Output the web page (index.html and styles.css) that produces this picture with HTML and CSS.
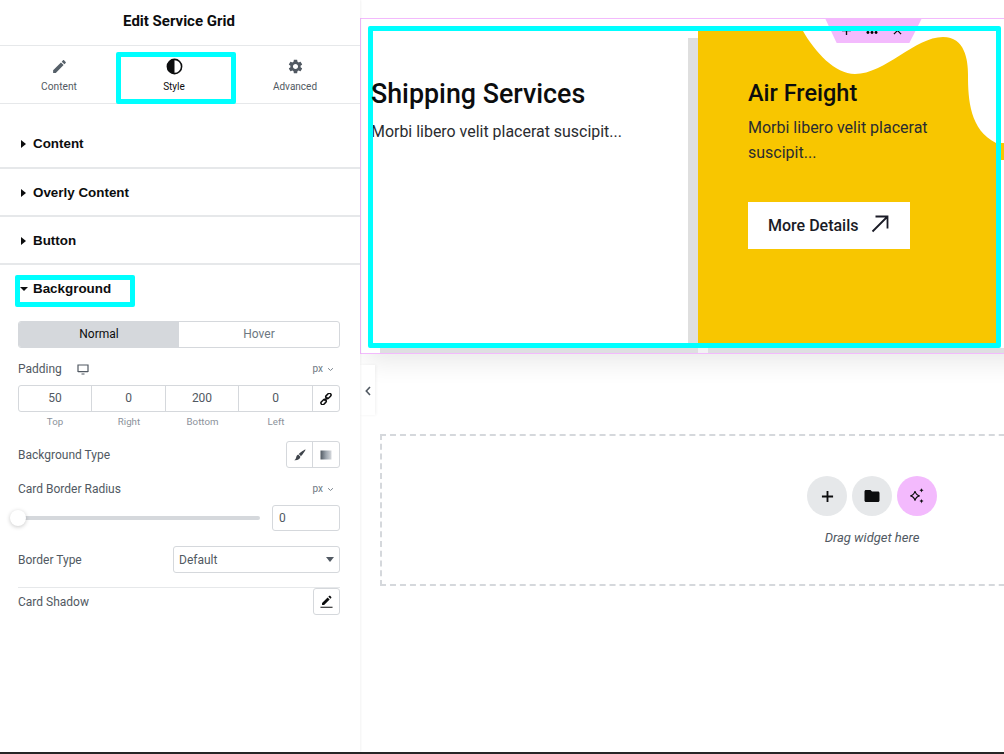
FILE: index.html
```html
<!DOCTYPE html>
<html lang="en">
<head>
<meta charset="utf-8">
<title>Edit Service Grid</title>
<link rel="stylesheet" href="styles.css">
</head>
<body>
<div class="app">
  <aside class="panel">
    <header class="panel-title">Edit Service Grid</header>
    <nav class="tabs">
      <div class="tab tab-first">
        <svg class="tab-icon" viewBox="0 0 24 24"><path fill="#566069" d="M3 17.25V21h3.75L17.81 9.94l-3.75-3.75L3 17.25zM20.71 7.04c.39-.39.39-1.02 0-1.41l-2.34-2.34c-.39-.39-1.02-.39-1.41 0l-1.83 1.83 3.75 3.75 1.83-1.83z"/></svg>
        <span>Content</span>
      </div>
      <div class="tab tab-active">
        <svg class="tab-icon" viewBox="0 0 16 16"><circle cx="8" cy="8" r="6.7" fill="#fff" stroke="#0c0d0e" stroke-width="1.5"/><path fill="#0c0d0e" d="M8 1.3a6.7 6.7 0 0 0 0 13.4z"/></svg>
        <span>Style</span>
      </div>
      <div class="tab">
        <svg class="tab-icon" viewBox="0 0 24 24"><path fill="#515962" d="M19.14 12.94c.04-.3.06-.61.06-.94 0-.32-.02-.64-.07-.94l2.03-1.58c.18-.14.23-.41.12-.61l-1.92-3.32c-.12-.22-.37-.29-.59-.22l-2.39.96c-.5-.38-1.03-.7-1.62-.94l-.36-2.54c-.04-.24-.24-.41-.48-.41h-3.84c-.24 0-.43.17-.47.41l-.36 2.54c-.59.24-1.13.57-1.62.94l-2.39-.96c-.22-.08-.47 0-.59.22L2.74 8.87c-.12.21-.08.47.12.61l2.03 1.58c-.05.3-.09.63-.09.94s.02.64.07.94l-2.03 1.58c-.18.14-.23.41-.12.61l1.92 3.32c.12.22.37.29.59.22l2.39-.96c.5.38 1.03.7 1.62.94l.36 2.54c.05.24.24.41.48.41h3.84c.24 0 .44-.17.47-.41l.36-2.54c.59-.24 1.13-.56 1.62-.94l2.39.96c.22.08.47 0 .59-.22l1.92-3.32c.12-.22.07-.47-.12-.61l-2.01-1.58zM12 15.6c-1.98 0-3.6-1.62-3.6-3.6s1.62-3.6 3.6-3.6 3.6 1.62 3.6 3.6-1.62 3.6-3.6 3.6z"/></svg>
        <span>Advanced</span>
      </div>
    </nav>

    <div class="sections">
      <div class="section section-first"><i class="caret-right"></i>Content</div>
      <div class="section"><i class="caret-right"></i>Overly Content</div>
      <div class="section"><i class="caret-right"></i>Button</div>
      <div class="section-open"><i class="caret-down"></i>Background</div>
    </div>

    <div class="controls">
      <div class="toggle">
        <div class="toggle-item toggle-on">Normal</div>
        <div class="toggle-item">Hover</div>
      </div>

      <div class="label-row padding-row">
        <span class="label-group">Padding
          <svg class="device" viewBox="0 0 12 11"><path fill="none" stroke="#515962" stroke-width="1.2" d="M1 1h10v6.5H1z"/><path fill="#515962" d="M1 7h10v1.3H1zM4.5 9.6h3v1h-3z"/></svg>
        </span>
        <span class="unit">px <svg class="unit-caret" viewBox="0 0 8 5"><path fill="none" stroke="#6d7882" stroke-width="1" d="M1.2 1l2.8 2.6L6.8 1"/></svg></span>
      </div>
      <div class="dims">
        <div class="dim">50</div>
        <div class="dim">0</div>
        <div class="dim">200</div>
        <div class="dim">0</div>
        <div class="dim dim-link">
          <svg class="link-icon" viewBox="0 0 12 12"><g fill="none" stroke="#0c0d0e" stroke-width="1.5"><rect x="5.4" y="1.2" width="6" height="3.4" rx="1.7" transform="rotate(-45 8.4 2.9)"/><rect x="0.6" y="7.4" width="6" height="3.4" rx="1.7" transform="rotate(-45 3.6 9.1)"/><path d="M4.4 7.6 7.6 4.4"/></g></svg>
        </div>
      </div>
      <div class="dim-labels">
        <span>Top</span><span>Right</span><span>Bottom</span><span>Left</span><span></span>
      </div>

      <div class="label-row bg-row">
        <span>Background Type</span>
        <div class="choices">
          <div class="choice">
            <svg class="choice-icon" viewBox="0 0 14 14"><path fill="#3f444b" d="M13.4.6c.4.4-3 5.6-5.2 7.8L5.6 5.8C7.8 3.6 13 .2 13.4.6zM4.9 6.5l2.6 2.6C7.1 11.8 4 13.4.3 13c1.9-1 1.9-2.5 2.4-3.8.4-1.2 1-2.2 2.2-2.7z"/></svg>
          </div>
          <div class="choice">
            <svg class="choice-icon" viewBox="0 0 12 12"><defs><linearGradient id="grad"><stop offset="0" stop-color="#515962"/><stop offset=".5" stop-color="#9da5ae"/><stop offset="1" stop-color="#d5d8dc"/></linearGradient></defs><rect x="0.5" y="1.5" width="11" height="9" fill="url(#grad)"/></svg>
          </div>
        </div>
      </div>

      <div class="label-row radius-row">
        <span>Card Border Radius</span>
        <span class="unit">px <svg class="unit-caret" viewBox="0 0 8 5"><path fill="none" stroke="#6d7882" stroke-width="1" d="M1.2 1l2.8 2.6L6.8 1"/></svg></span>
      </div>
      <div class="slider-row">
        <div class="slider"><span class="knob"></span></div>
        <div class="number">0</div>
      </div>

      <div class="label-row border-row">
        <span>Border Type</span>
        <div class="select">Default<i class="select-caret"></i></div>
      </div>

      <div class="label-row shadow-row">
        <span>Card Shadow</span>
        <div class="edit-btn">
          <svg class="edit-icon" viewBox="0 0 14 14"><path fill="#0c0d0e" d="M2.2 8.6 8.2 2.6l2.2 2.2-6 6H2.200zM9 1.800l.9-.9c.3-.3.7-.3 1 0l1.200 1.200c.3.3.3.7 0 1l-.9.9zM0.500 12.700h13V13.800H.5z"/></svg>
        </div>
      </div>
    </div>
  </aside>

  <main class="canvas">
    <section class="widget">
      <div class="frame">
        <article class="card-plain">
          <h2 class="plain-title">Shipping Services</h2>
          <p class="plain-text">Morbi libero velit placerat suscipit...</p>
        </article>
        <div class="card-gap"></div>
        <article class="card-yellow">
          <svg class="blob" viewBox="0 0 298 312"><path fill="#fff" d="M105 0C117 21 137 43 157 43C187 43 217 6 245 6C267 6 270 29 270 44C270 69 272 99 298 112V0Z"/></svg>
          <h2 class="yellow-title">Air Freight</h2>
          <p class="yellow-text">Morbi libero velit placerat suscipit...</p>
          <a class="more">More Details
            <svg class="more-icon" viewBox="0 0 18 18"><path fill="none" stroke="#1a1b26" stroke-width="1.8" d="M1.5 16.5 16 2M4.500 1.500H16.500V13.500"/></svg>
          </a>
        </article>
      </div>
      <div class="frame-strip"></div>
      <div class="handle">
        <svg class="handle-icon" viewBox="0 0 10 10"><path stroke="#0c0d0e" stroke-width="1.500" d="M5 0V10M0 5H10"/></svg>
        <svg class="handle-icon handle-dots" viewBox="0 0 14 10"><circle cx="2.500" cy="5" r="1.600"/><circle cx="7" cy="5" r="1.600"/><circle cx="11.500" cy="5" r="1.600"/></svg>
        <svg class="handle-icon" viewBox="0 0 10 10"><path fill="none" stroke="#0c0d0e" stroke-width="1.400" d="M1 1 9 9M9 1 1 9"/></svg>
      </div>
    </section>

    <div class="collapse">
      <svg class="collapse-icon" viewBox="0 0 6 10"><path fill="none" stroke="#515962" stroke-width="1.6" d="M5 1 1.300 5 5 9"/></svg>
    </div>

    <div class="dropzone">
      <div class="drop-buttons">
        <div class="round">
          <svg class="round-icon" viewBox="0 0 14 14"><path stroke="#0c0d0e" stroke-width="2" d="M7 1V13M1 7H13"/></svg>
        </div>
        <div class="round">
          <svg class="round-icon folder" viewBox="0 0 24 24"><path fill="#0c0d0e" d="M10 4H4c-1.100 0-2 .9-2 2v12c0 1.100.9 2 2 2h16c1.100 0 2-.9 2-2V8c0-1.100-.9-2-2-2h-8l-2-2z"/></svg>
        </div>
        <div class="round round-ai">
          <svg class="round-icon ai" viewBox="0 0 18 18"><path fill="none" stroke="#0c0d0e" stroke-width="1.100" d="M7 4.200C7.600 7 8.800 8.200 11.600 8.900 8.800 9.600 7.600 10.800 7 13.600 6.400 10.800 5.200 9.600 2.400 8.900 5.200 8.200 6.400 7 7 4.200Z"/><path fill="#0c0d0e" d="M13.500 1C13.800 2.400 14.400 3 15.800 3.300 14.400 3.600 13.800 4.200 13.500 5.600 13.200 4.200 12.600 3.600 11.200 3.300 12.600 3 13.200 2.400 13.500 1ZM13.500 11.800C13.800 13.200 14.400 13.800 15.800 14.100 14.400 14.400 13.800 15 13.500 16.400 13.200 15 12.600 14.400 11.200 14.100 12.600 13.800 13.200 13.200 13.500 11.800Z"/></svg>
        </div>
      </div>
      <p class="drop-text">Drag widget here</p>
    </div>
  </main>
</div>
<div class="bottom-bar"></div>
</body>
</html>
```
FILE: styles.css
```css
* { box-sizing: border-box; }
html, body { margin: 0; height: 100%; }
body {
  display: flex;
  flex-direction: column;
  height: 754px;
  overflow: hidden;
  background: #fff;
  font-family: Roboto, "Liberation Sans", sans-serif;
  color: #515962;
}
.app { flex: 1; display: flex; min-height: 0; }
.bottom-bar { height: 2px; background: #262626; }

/* Side panel */
.panel {
  flex: none;
  width: 360px;
  background: #fff;
  position: relative;
  z-index: 1;
  box-shadow: 1px 0 2px rgba(0, 0, 0, .05);
}
.panel-title {
  height: 46px;
  padding: 12px 2px 0 0;
  border-bottom: 1px solid #e6e8ea;
  text-align: center;
  font-size: 15px;
  line-height: 18px;
  font-weight: 700;
  color: #0c0d0e;
}
.tabs {
  display: grid;
  grid-template-columns: 116px 120px 118px;
  height: 58px;
  border-bottom: 1px solid #e6e8ea;
}
.tab {
  display: flex;
  flex-direction: column;
  align-items: center;
  padding-top: 12px;
  font-size: 10px;
  line-height: 12px;
  color: #515962;
}
.tab-first { padding-left: 2px; font-size: 10.2px; }
.tab-icon { width: 17px; height: 17px; margin-bottom: 6px; display: block; }
.tab-active {
  margin-top: 6px;
  height: 52px;
  padding: 1px 4px 0 0;
  border: 5px solid #00ffff;
  border-radius: 2px;
  color: #0c0d0e;
}

.sections { padding-top: 17px; }
.section {
  display: flex;
  align-items: center;
  height: 48px;
  padding: 1px 0 0 21px;
  border-bottom: 2px solid #e6e8ea;
  font: 700 13.4px/18px "Liberation Sans", Arial, sans-serif;
  color: #0c0d0e;
}
.section-first { padding-top: 0; padding-bottom: 1px; }
.caret-right {
  width: 0; height: 0;
  margin-right: 7px;
  border-left: 5px solid #0c0d0e;
  border-top: 4px solid transparent;
  border-bottom: 4px solid transparent;
}
.section-open {
  display: flex;
  align-items: center;
  width: 120px;
  height: 32px;
  margin: 10px 0 0 15px;
  padding-bottom: 4px;
  border: 5px solid #00ffff;
  border-radius: 2px;
  font: 700 13.4px/18px "Liberation Sans", Arial, sans-serif;
  color: #0c0d0e;
}
.caret-down {
  width: 0; height: 0;
  margin-right: 5px;
  border-top: 4px solid #0c0d0e;
  border-left: 4px solid transparent;
  border-right: 4px solid transparent;
}

/* Controls */
.controls { padding: 14px 20px 0 18px; font-size: 12px; line-height: 16px; }
.toggle {
  display: grid;
  grid-template-columns: 160px 160px;
  height: 27px;
  border: 1px solid #d5d8dc;
  border-radius: 3px;
  overflow: hidden;
}
.toggle-item { text-align: center; line-height: 25px; color: #6d7882; }
.toggle-on { background: #d5d8dc; color: #0c0d0e; }
.label-row { display: flex; justify-content: space-between; align-items: center; }
.label-group { display: flex; align-items: center; gap: 14px; }
.device { width: 12px; height: 11px; margin-left: 1px; }
.padding-row { height: 16px; margin-top: 13px; }
.unit { display: flex; align-items: center; gap: 4px; font-size: 10px; color: #6d7882; padding-right: 6px; }
.unit-caret { width: 7px; height: 5px; }
.dims {
  display: grid;
  grid-template-columns: 73px 74px 73px 74px 26px;
  height: 27px;
  margin-top: 8px;
  border: 1px solid #d5d8dc;
  border-radius: 3px;
}
.dim {
  text-align: center;
  line-height: 25px;
  border-right: 1px solid #d5d8dc;
  color: #515962;
}
.dim-link { border-right: 0; display: flex; align-items: center; justify-content: center; }
.link-icon { width: 12px; height: 12px; }
.dim-labels {
  display: grid;
  grid-template-columns: 74px 74px 73px 74px 26px;
  margin-top: 4px;
  font-size: 9.7px;
  line-height: 12px;
  text-align: center;
  color: #8b929b;
}
.bg-row { height: 27px; margin-top: 13px; }
.choices {
  display: grid;
  grid-template-columns: 26px 26px;
  height: 27px;
  border: 1px solid #d5d8dc;
  border-radius: 3px;
}
.choice { display: flex; align-items: center; justify-content: center; }
.choice:first-child { border-right: 1px solid #d5d8dc; }
.choice-icon { width: 12px; height: 12px; }
.radius-row { height: 16px; margin-top: 13px; }
.slider-row { display: flex; align-items: center; justify-content: space-between; margin-top: 8px; height: 26px; }
.slider {
  position: relative;
  width: 242px;
  height: 4px;
  border-radius: 2px;
  background: #d5d8dc;
}
.knob {
  position: absolute;
  left: -8px;
  top: -6px;
  width: 16px;
  height: 16px;
  border-radius: 50%;
  background: #fff;
  box-shadow: 0 1px 4px rgba(0, 0, 0, .22);
}
.number {
  width: 68px;
  height: 26px;
  padding-left: 6px;
  line-height: 24px;
  border: 1px solid #d5d8dc;
  border-radius: 3px;
}
.border-row { height: 27px; margin-top: 15px; }
.select {
  display: flex;
  align-items: center;
  justify-content: space-between;
  width: 167px;
  height: 27px;
  padding: 0 5px;
  border: 1px solid #d5d8dc;
  border-radius: 3px;
}
.select-caret {
  width: 0; height: 0;
  border-top: 5px solid #515962;
  border-left: 4.5px solid transparent;
  border-right: 4.5px solid transparent;
}
.shadow-row { height: 28px; margin-top: 14px; border-top: 1px solid #e6e8ea; }
.edit-btn {
  display: flex;
  align-items: center;
  justify-content: center;
  width: 27px;
  height: 27px;
  border: 1px solid #d5d8dc;
  border-radius: 3px;
}
.edit-icon { width: 13px; height: 13px; }

/* Canvas */
.canvas { flex: 1; min-width: 0; overflow: hidden; position: relative; }
.widget {
  position: relative;
  width: 680px;
  height: 336px;
  margin-top: 18px;
  padding: 7px 0 0 7px;
  border: 1px solid #f3bafd;
  box-shadow: 0 14px 24px -6px rgba(0, 0, 0, .09);
}
.frame {
  position: relative;
  display: flex;
  width: 633px;
  height: 322px;
  padding: 5px;
}
.frame::after {
  content: "";
  position: absolute;
  inset: 0;
  z-index: 3;
  border: 5px solid #00ffff;
  border-radius: 2px;
}
.card-plain { flex: none; width: 315px; padding-top: 48px; }
.plain-title {
  position: relative;
  z-index: 4;
  margin: 0 0 0 -2px;
  font-size: 26.8px;
  line-height: 30px;
  font-weight: 500;
  color: #0c0d0e;
}
.plain-text {
  margin: 9px 0 0 -2px;
  font-size: 15.95px;
  line-height: 27px;
  color: #2a2c30;
}
.card-gap { flex: none; width: 10px; background: linear-gradient(#fff 7px, #dfdfdf 7px); }
.card-yellow {
  position: relative;
  flex: none;
  width: 298px;
  padding: 47px 0 0 50px;
  background: #f8c600;
}
.card-yellow::after {
  content: "";
  position: absolute;
  right: -8px;
  top: 112px;
  width: 3px;
  height: 17px;
  background: #f8c600;
}
.blob { position: absolute; left: 0; top: 0; width: 298px; height: 312px; }
.yellow-title {
  position: relative;
  margin: 0;
  font-size: 23.5px;
  line-height: 30px;
  font-weight: 500;
  color: #0c0d0e;
}
.yellow-text {
  position: relative;
  margin: 7px 0 0;
  font-size: 16px;
  line-height: 25px;
  color: #2a2c30;
}
.more {
  display: flex;
  align-items: center;
  width: 162px;
  height: 47px;
  margin-top: 37px;
  padding-left: 20px;
  background: #fff;
  font-size: 16px;
  font-weight: 500;
  color: #1a1b26;
}
.more-icon { width: 18px; height: 18px; margin-left: 13px; margin-top: -3px; }
.frame-strip {
  height: 5px;
  margin-left: 12px;
  background: linear-gradient(90deg, #dedfe1 318px, #f2f2f4 318px, #f2f2f4 328px, #dedfe1 328px);
}
.handle {
  position: absolute;
  left: 464px;
  top: -1px;
  z-index: 2;
  display: flex;
  align-items: center;
  justify-content: center;
  gap: 14px;
  width: 97px;
  height: 25px;
  padding-right: 3px;
  background: #f3bafd;
  clip-path: polygon(0 0, 100% 0, 87% 100%, 12% 100%);
}
.handle-icon { flex: none; width: 9px; height: 9px; overflow: visible; }
.handle-dots { width: 14px; margin-top: 4px; }
.collapse {
  position: absolute;
  left: 0;
  top: 365px;
  display: flex;
  align-items: center;
  justify-content: center;
  width: 15px;
  height: 50px;
  background: #fff;
  box-shadow: 1px 0 3px rgba(0, 0, 0, .06);
  padding-top: 2px;
}
.collapse-icon { width: 6px; height: 10px; }
.dropzone {
  display: flex;
  flex-direction: column;
  align-items: center;
  width: 984px;
  height: 152px;
  margin: 80px 0 0 20px;
  padding-top: 40px;
  border: 2px dashed #d5d8dc;
}
.drop-buttons { display: flex; gap: 5px; }
.round {
  display: flex;
  align-items: center;
  justify-content: center;
  width: 40px;
  height: 40px;
  border-radius: 50%;
  background: #e6e8ea;
}
.round-ai { background: #f3bafd; }
.round-icon { width: 13px; height: 13px; }
.round-icon.folder { width: 18px; height: 18px; }
.round-icon.ai { width: 18px; height: 18px; }
.drop-text {
  margin: 14px 0 0;
  font-size: 13px;
  line-height: 16px;
  font-style: italic;
  color: #515962;
}
```
